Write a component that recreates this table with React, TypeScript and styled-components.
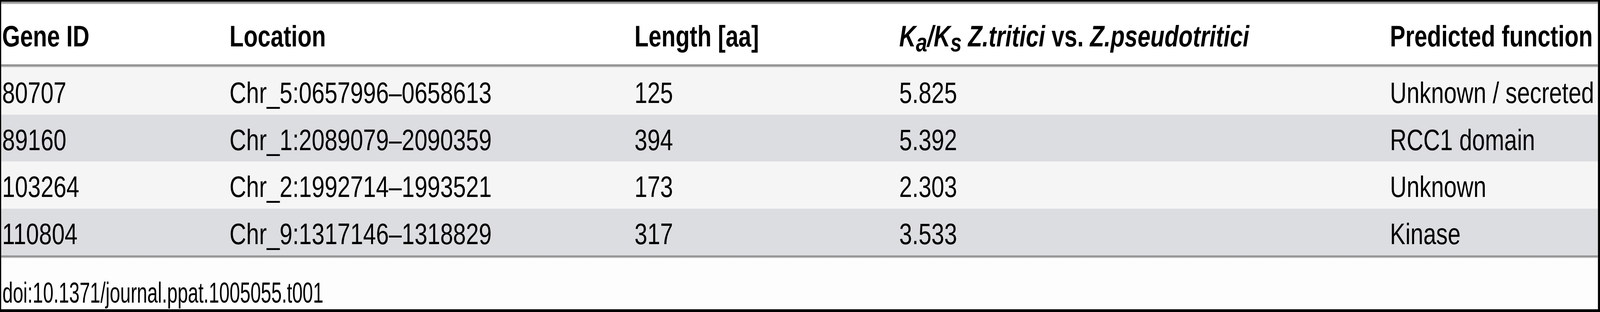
import React, { useEffect, useState } from 'react'
import styled, { createGlobalStyle } from 'styled-components'

const GlobalStyle = createGlobalStyle`
  html, body {
    margin: 0;
    padding: 0;
    background: #000;
    overflow: hidden;
  }
  body {
    min-height: 800px;
    font-family: "Liberation Sans", Arial, sans-serif;
    color: #000;
  }
`

// the table is drawn for a 5263px wide page
const DESIGN_WIDTH = 5263

type GeneRow = {
    id: string,
    location: string,
    length: number,
    ratio: string,
    fn: string,
}

const rows: GeneRow[] = [
    { id: '80707', location: 'Chr_5:0657996–0658613', length: 125, ratio: '5.825', fn: 'Unknown / secreted' },
    { id: '89160', location: 'Chr_1:2089079–2090359', length: 394, ratio: '5.392', fn: 'RCC1 domain' },
    { id: '103264', location: 'Chr_2:1992714–1993521', length: 173, ratio: '2.303', fn: 'Unknown' },
    { id: '110804', location: 'Chr_9:1317146–1318829', length: 317, ratio: '3.533', fn: 'Kinase' },
]

const Viewport = styled.div`
  width: 100vw;
  height: 800px;
  overflow: hidden;
`

const Stage = styled.div`
  width: ${DESIGN_WIDTH}px;
  transform-origin: 0 0;
`

// frame inside the black edge of the screenshot
const Frame = styled.div`
  margin: 4px 7px 7px 4px;
  height: 789px;
  background: #fff;
  overflow: hidden;
  display: flex;
  flex-direction: column;
`

const Rule = styled.div<{ $h: number }>`
  height: ${p => p.$h}px;
  flex: none;
  background: linear-gradient(#8c8c8c 0%, #9a9a9a 55%, #c8c8c8 80%, #ececec 100%);
`

const Row = styled.div<{ $bg: string, $h: number, $bold?: boolean }>`
  display: grid;
  grid-template-columns: 748px 1332px 871px 1614px 1fr;
  height: ${p => p.$h}px;
  flex: none;
  background: ${p => p.$bg};
  font-size: 76px;
  font-weight: ${p => (p.$bold ? 700 : 400)};
`

const Cell = styled.div<{ $shift: number }>`
  display: flex;
  align-items: center;
  padding: ${p => p.$shift}px 0 0 3px;
  line-height: 87px;
  white-space: nowrap;
  overflow: hidden;
`

const Italic = styled.span`
  font-style: italic;
`

const Sub = styled.span`
  font-size: 88%;
  vertical-align: -13px;
  line-height: 0;
`

const Caption = styled.div`
  flex: 1;
  display: flex;
  align-items: flex-end;
  padding-left: 4px;
  background: #fdfdfd;
  font-size: 75px;
  line-height: 86px;
  white-space: nowrap;
`

// the doi line is set in a narrow face
const Narrow = styled.span`
  display: inline-block;
  transform: scaleX(0.822);
  transform-origin: 0 50%;
`

const stripe = (i: number) => (i % 2 === 0 ? '#f5f5f5' : '#dcdde0')

const useFit = () => {
    const [k, setK] = useState(() => Math.min(1, window.innerWidth / DESIGN_WIDTH))
    useEffect(() => {
        const onResize = () => setK(Math.min(1, window.innerWidth / DESIGN_WIDTH))
        window.addEventListener('resize', onResize)
        return () => window.removeEventListener('resize', onResize)
    }, [])
    return k
}

const App: React.FC = () => {
    const k = useFit()
    return (
        <>
            <GlobalStyle />
            <Viewport>
                <Stage style={{ transform: `scaleX(${k})` }}>
                    <Frame>
                        <Rule $h={7} />
                        <Row $bg="#fff" $h={154} $bold>
                            <Cell $shift={8}>Gene ID</Cell>
                            <Cell $shift={8}>Location</Cell>
                            <Cell $shift={8}>Length [aa]</Cell>
                            <Cell $shift={8}>
                                <Italic>
                                    K<Sub>a</Sub>/K<Sub>s</Sub> Z.tritici
                                </Italic>
                                &nbsp;vs.&nbsp;
                                <Italic>Z.pseudotritici</Italic>
                            </Cell>
                            <Cell $shift={8}>Predicted function</Cell>
                        </Row>
                        <Rule $h={8} />
                        {rows.map((r, i) => (
                            <Row key={r.id} $bg={stripe(i)} $h={120.5}>
                                <Cell $shift={9}>{r.id}</Cell>
                                <Cell $shift={9}>{r.location}</Cell>
                                <Cell $shift={9}>{r.length}</Cell>
                                <Cell $shift={9}>{r.ratio}</Cell>
                                <Cell $shift={9}>{r.fn}</Cell>
                            </Row>
                        ))}
                        <Rule $h={7} />
                        <Caption>
                            <Narrow>doi:10.1371/journal.ppat.1005055.t001</Narrow>
                        </Caption>
                    </Frame>
                </Stage>
            </Viewport>
        </>
    )
}

export default App
